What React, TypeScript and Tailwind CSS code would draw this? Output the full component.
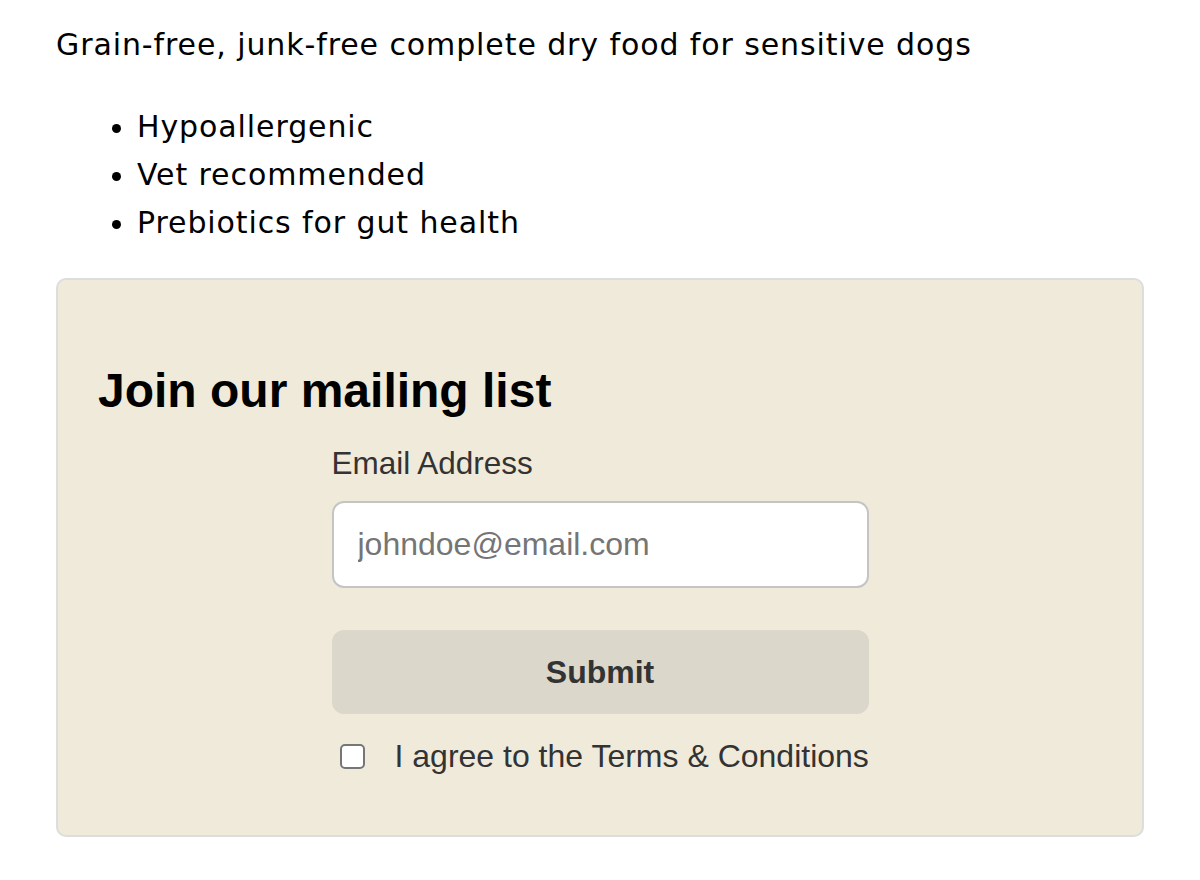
import React from "react";

export default function App() {
  return (
    <div className="min-h-[880px] bg-white px-[56px] pt-[21px] pb-[40px]">
      <p
        className="text-[30px] leading-[48px] tracking-[0.9px] text-black"
        style={{ fontFamily: '"DejaVu Sans", sans-serif' }}
      >
        Grain-free, junk-free complete dry food for sensitive dogs
      </p>
      <ul
        className="mt-[34px] list-disc pl-[81px] text-[30px] leading-[48px] tracking-[0.9px] text-black"
        style={{ fontFamily: '"DejaVu Sans", sans-serif' }}
      >
        <li>Hypoallergenic</li>
        <li>Vet recommended</li>
        <li>Prebiotics for gut health</li>
      </ul>
      <div
        className="mt-[31px] rounded-[10px] border-2 border-[#dddddd] bg-[#f0eadb] px-[40px] pt-[87px] pb-[61px]"
        style={{ fontFamily: '"Liberation Sans", Arial, sans-serif' }}
      >
        <h2 className="text-[48px] font-bold leading-[48px] text-black">Join our mailing list</h2>
        <div className="mx-auto mt-[30px] flex w-[537px] flex-col">
          <label className="text-[31.5px] leading-[36px] text-[#333333]">Email Address</label>
          <input
            type="email"
            placeholder="johndoe@email.com"
            className="mt-[20px] h-[87px] w-full rounded-xl border-2 border-[#c4c4c4] bg-white px-[24px] text-[32px] text-[#333] placeholder:text-[#757575] outline-none"
          />
          <button className="mt-[42px] h-[84px] w-full rounded-xl bg-[#dbd7cb] text-[32px] font-bold text-[#333333]">
            Submit
          </button>
          <label className="mt-[24px] flex items-center whitespace-nowrap text-[32px] leading-[36px] text-[#333333]">
            <span className="ml-[8px] mr-[30px] inline-block h-[25px] w-[25px] shrink-0 rounded-[5px] border-2 border-[#767676] bg-white" />
            I agree to the Terms &amp; Conditions
          </label>
        </div>
      </div>
    </div>
  );
}
